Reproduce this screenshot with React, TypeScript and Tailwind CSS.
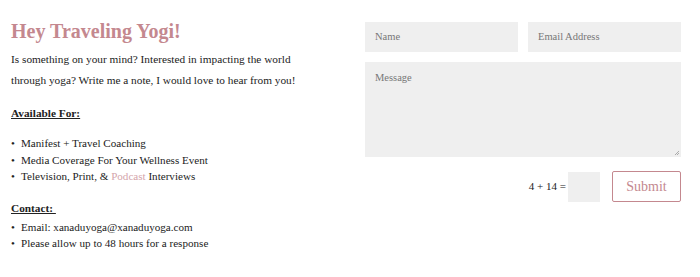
export default function App() {
  const serif = { fontFamily: '"Liberation Serif", "DejaVu Serif", serif' };
  return (
    <div className="w-[700px] h-[277px] bg-white flex overflow-hidden text-[#222]" style={serif}>
      <div className="w-[354px] pl-[11px] pt-[19px]">
        <h1 className="text-[20px] leading-[24px] font-bold text-[#c4888f]">Hey Traveling Yogi!</h1>
        <p className="mt-[6px] w-[300px] text-[11.3px] leading-[21px]">
          Is something on your mind? Interested in impacting the world through yoga? Write me a note, I would love to hear from you!
        </p>
        <p className="mt-[14px] text-[11.3px] leading-[16px] font-bold underline">Available For:</p>
        <ul className="mt-[14px] text-[11.1px] leading-[16.5px]">
          <li className="flex"><span className="w-[10px]">•</span>Manifest + Travel Coaching</li>
          <li className="flex"><span className="w-[10px]">•</span>Media Coverage For Your Wellness Event</li>
          <li className="flex"><span className="w-[10px]">•</span>Television, Print, &amp;&nbsp;<span className="text-[#d4a5ab]">Podcast</span>&nbsp;Interviews</li>
        </ul>
        <p className="mt-[15px] text-[11.3px] leading-[16px] font-bold underline">Contact:&nbsp;</p>
        <ul className="mt-[3px] text-[11.1px] leading-[16.5px]">
          <li className="flex"><span className="w-[10px]">•</span>Email: xanaduyoga@xanaduyoga.com</li>
          <li className="flex"><span className="w-[10px]">•</span>Please allow up to 48 hours for a response</li>
        </ul>
      </div>
      <div className="w-[316px] ml-[11px] pt-[22px] flex flex-col">
        <div className="flex gap-[10px]">
          <div className="w-[153px] h-[30px] bg-[#efefef] text-[10.5px] text-[#777] pl-[10px] flex items-center">Name</div>
          <div className="w-[153px] h-[30px] bg-[#efefef] text-[10.5px] text-[#777] pl-[10px] flex items-center">Email Address</div>
        </div>
        <div className="mt-[10px] h-[95px] bg-[#efefef] text-[10.5px] text-[#777] pl-[10px] pt-[8px] relative">
          Message
          <svg className="absolute right-[1px] bottom-[1px]" width="6" height="6" viewBox="0 0 6 6">
            <path d="M1 5 L5 1 M3 5 L5 3" stroke="#999" strokeWidth="0.8" />
          </svg>
        </div>
        <div className="mt-[14px] flex items-center justify-end">
          <span className="text-[11px] text-[#222] mr-[2px]">4 + 14 =</span>
          <div className="w-[32px] h-[30px] bg-[#efefef]" />
          <button className="ml-[12px] w-[69px] h-[31px] border border-[#c4888f] rounded-[2px] text-[14px] text-[#c4888f]">Submit</button>
        </div>
      </div>
    </div>
  );
}
